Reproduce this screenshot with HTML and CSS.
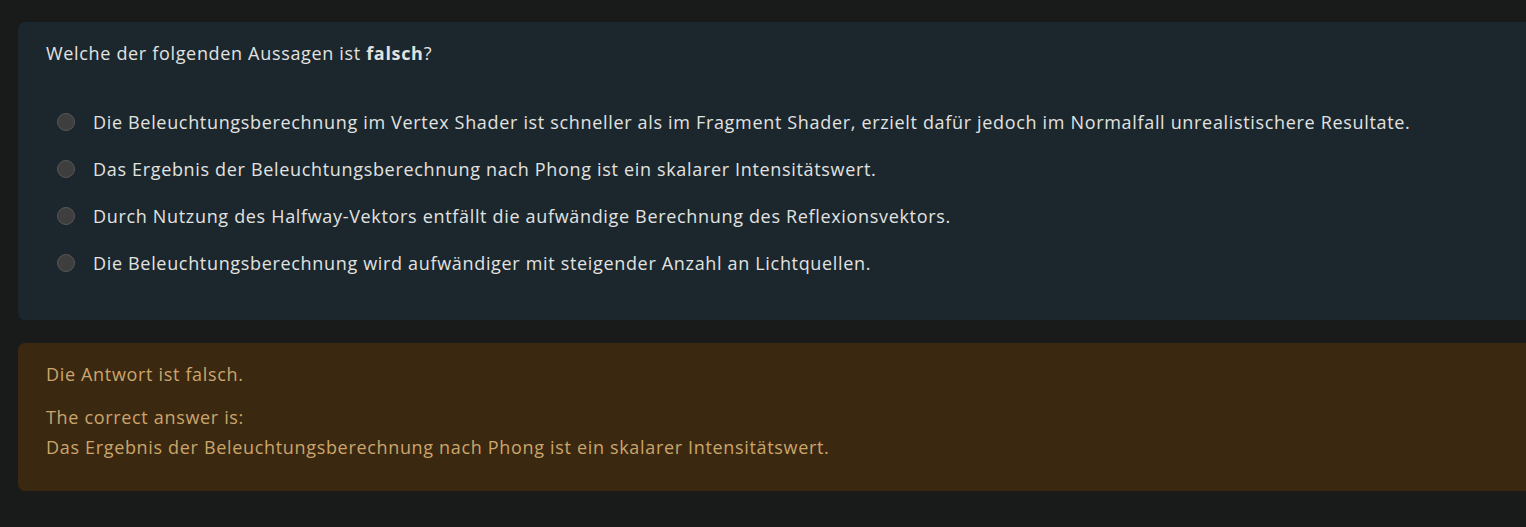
FILE: index.html
```html
<!DOCTYPE html>
<html lang="de">
<head>
<meta charset="utf-8">
<link rel="stylesheet" href="styles.css">
</head>
<body>
<div class="page">
  <section class="question">
    <p class="prompt">Welche der folgenden Aussagen ist <strong>falsch</strong>?</p>
    <ul class="options">
      <li class="option"><span class="radio"></span><span>Die Beleuchtungsberechnung im Vertex Shader ist schneller als im Fragment Shader, erzielt dafür jedoch im Normalfall unrealistischere Resultate.</span></li>
      <li class="option"><span class="radio"></span><span>Das Ergebnis der Beleuchtungsberechnung nach Phong ist ein skalarer Intensitätswert.</span></li>
      <li class="option"><span class="radio"></span><span>Durch Nutzung des Halfway-Vektors entfällt die aufwändige Berechnung des Reflexionsvektors.</span></li>
      <li class="option"><span class="radio"></span><span>Die Beleuchtungsberechnung wird aufwändiger mit steigender Anzahl an Lichtquellen.</span></li>
    </ul>
  </section>
  <section class="feedback">
    <p class="verdict">Die Antwort ist falsch.</p>
    <p class="correct">The correct answer is:<br>Das Ergebnis der Beleuchtungsberechnung nach Phong ist ein skalarer Intensitätswert.</p>
  </section>
</div>
</body>
</html>
```
FILE: styles.css
```css
html, body {
  margin: 0;
  padding: 0;
  background: #191a1a;
}
body {
  font-family: "Open Sans", "Noto Sans", sans-serif;
  font-size: 18px;
  letter-spacing: 0.67px;
  color: #e2e2e0;
}
.page {
  padding: 22px 0 0 18px;
  display: flex;
  flex-direction: column;
  gap: 23px;
}
.question {
  background: #1b272d;
  border-radius: 7px 0 0 7px;
  padding: 17px 0 26px 28px;
  height: 255px;
}
.prompt {
  margin: 0;
  line-height: 28px;
}
.prompt strong {
  font-weight: 700;
}
.options {
  list-style: none;
  margin: 41px 0 0 0;
  padding: 0 0 0 11px;
  display: flex;
  flex-direction: column;
  gap: 19px;
}
.option {
  display: flex;
  align-items: center;
  gap: 18px;
  line-height: 28px;
}
.radio {
  width: 16px;
  height: 16px;
  border-radius: 50%;
  background: #3e3e3e;
  border: 1px solid #575757;
  flex: none;
}
.feedback {
  background: #3a2811;
  border-radius: 7px 0 0 7px;
  padding: 17px 0 0 28px;
  height: 131px;
  color: #cba56c;
}
.verdict {
  margin: 0;
  line-height: 28px;
}
.correct {
  margin: 14px 0 0 0;
  line-height: 30px;
}
```
